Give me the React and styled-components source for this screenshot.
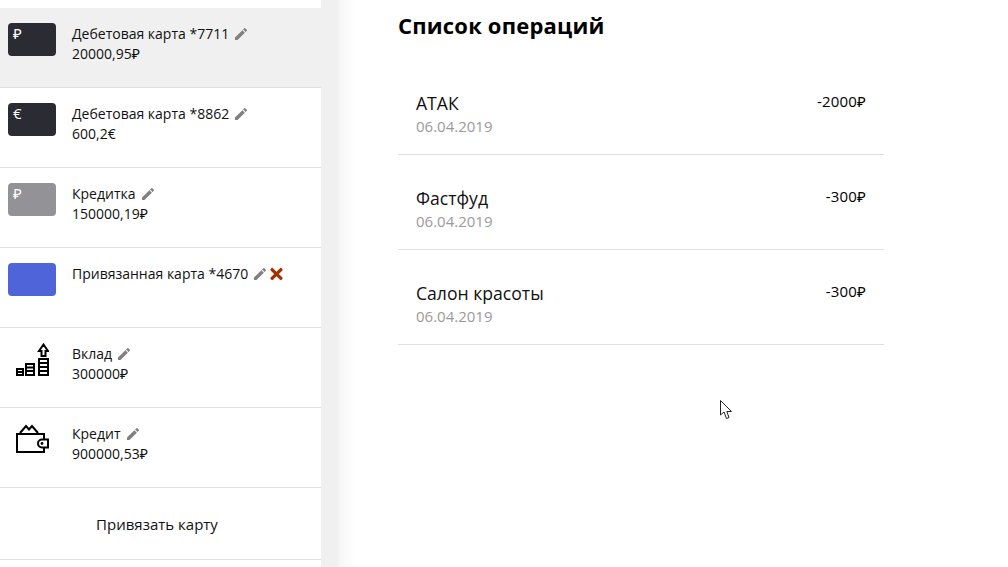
import React from "react";
import styled, { createGlobalStyle } from "styled-components";
import { FaTimes } from "react-icons/fa";
import { MdEdit } from "react-icons/md";

const GlobalStyle = createGlobalStyle`
  html, body {
    margin: 0;
    padding: 0;
    height: 100%;
    background: #fff;
    overflow: hidden;
  }
  body {
    font-family: "Open Sans", "Noto Sans", sans-serif;
    color: #000;
  }
`;

const Page = styled.div`
  display: flex;
  width: 1008px;
  height: 567px;
  position: relative;
`;

const Sidebar = styled.aside`
  width: 321px;
  flex-shrink: 0;
  padding-top: 8px;
  box-sizing: border-box;
`;

const Gutter = styled.div`
  width: 34px;
  flex-shrink: 0;
  background: linear-gradient(to right, #f0f0f0 0, #f0f0f0 17px, #f6f6f6 18px, #fff 34px);
`;

const Row = styled.div`
  display: flex;
  height: 80px;
  box-sizing: border-box;
  padding: 15px 0 0 8px;
  border-bottom: 1px solid #dfdfdf;
  background: ${(p) => (p.$active ? "#f0f0f0" : "#fff")};
`;

const Card = styled.div`
  width: 48px;
  height: 33px;
  border-radius: 4px;
  background: ${(p) => p.$color};
  color: #fff;
  font-size: 15px;
  line-height: 20px;
  padding-left: 5px;
  box-sizing: border-box;
  flex-shrink: 0;
`;

const IconBox = styled.div`
  width: 48px;
  height: 33px;
  flex-shrink: 0;
  padding-left: 8px;
  box-sizing: border-box;
`;

const Info = styled.div`
  margin-left: 16px;
  padding-top: 1px;
  font-size: 14px;
  line-height: 20px;
  color: #111;
`;

const Title = styled.div`
  display: flex;
  align-items: center;
  height: 20px;
`;

const Edit = styled(MdEdit)`
  width: 16px;
  height: 16px;
  margin-left: 4px;
  color: #808080;
`;

const Remove = styled(FaTimes)`
  width: 13px;
  height: 18px;
  margin-left: 2px;
  color: #a33200;
`;

const BindRow = styled.div`
  height: 72px;
  box-sizing: border-box;
  padding-right: 7px;
  border-bottom: 1px solid #dfdfdf;
  display: flex;
  align-items: center;
  justify-content: center;
  font-size: 15px;
  color: #111;
`;

const Main = styled.main`
  margin-left: 43px;
  width: 486px;
`;

const Heading = styled.h1`
  margin: 0 0 19px;
  padding-top: 9px;
  font-size: 22px;
  line-height: 32px;
  font-weight: 700;
  letter-spacing: 0.2px;
`;

const Operation = styled.div`
  display: flex;
  justify-content: space-between;
  height: 95px;
  box-sizing: border-box;
  padding: 31px 18px 0;
  border-bottom: 1px solid #dfdfdf;
`;

const OpName = styled.div`
  font-size: 17.6px;
  line-height: 24px;
  color: #111;
`;

const OpDate = styled.div`
  font-size: 15px;
  line-height: 22px;
  color: #9a9a9a;
`;

const OpSum = styled.div`
  font-size: 15px;
  line-height: 20px;
  letter-spacing: 0.2px;
`;

const Pointer = styled.svg`
  position: absolute;
  left: 720px;
  top: 400px;
`;

const DepositIcon = () => (
  <svg width="33" height="33" viewBox="0 0 33 33" fill="none" stroke="#000" strokeWidth="2">
    <path d="M27.5 1.5 L32 8 H29.5 V13 H25.5 V8 H23 Z" />
    <rect x="1" y="26" width="6" height="6" />
    <path d="M1 29 H7" />
    <rect x="10" y="21" width="8" height="11" />
    <path d="M10 24.5 H18 M10 28 H18" />
    <rect x="23" y="16" width="9" height="16" />
    <path d="M23 20 H32 M23 24 H32 M23 28 H32" />
  </svg>
);

const WalletIcon = () => (
  <svg width="33" height="30" viewBox="0 0 33 30" fill="none" stroke="#000" strokeWidth="2">
    <path d="M28 16 V11 H1 V29 H28 V25" />
    <path d="M4 10 L10 3 L13 6.5 L16 3 L22 10" />
    <path d="M32 16.5 H26 A4 4 0 0 0 26 24.5 H32 Z" fill="#fff" />
    <circle cx="26" cy="20.5" r="1.4" fill="#000" stroke="none" />
  </svg>
);

const accounts = [
  { title: "Дебетовая карта *7711", sum: "20000,95₽", color: "#2b2b33", sign: "₽", active: true },
  { title: "Дебетовая карта *8862", sum: "600,2€", color: "#2b2b33", sign: "€" },
  { title: "Кредитка", sum: "150000,19₽", color: "#929297", sign: "₽" },
  { title: "Привязанная карта *4670", color: "#5064da", removable: true },
  { title: "Вклад", sum: "300000₽", icon: <DepositIcon /> },
  { title: "Кредит", sum: "900000,53₽", icon: <WalletIcon /> },
];

const operations = [
  { name: "АТАК", date: "06.04.2019", sum: "-2000₽" },
  { name: "Фастфуд", date: "06.04.2019", sum: "-300₽" },
  { name: "Салон красоты", date: "06.04.2019", sum: "-300₽" },
];

export default function App() {
  return (
    <Page>
      <GlobalStyle />
      <Sidebar>
        {accounts.map((a) => (
          <Row key={a.title} $active={a.active}>
            {a.icon ? <IconBox>{a.icon}</IconBox> : <Card $color={a.color}>{a.sign}</Card>}
            <Info>
              <Title>
                {a.title}
                <Edit />
                {a.removable && <Remove />}
              </Title>
              <div>{a.sum}</div>
            </Info>
          </Row>
        ))}
        <BindRow>Привязать карту</BindRow>
      </Sidebar>
      <Gutter />
      <Main>
        <Heading>Список операций</Heading>
        {operations.map((o) => (
          <Operation key={o.name}>
            <div>
              <OpName>{o.name}</OpName>
              <OpDate>{o.date}</OpDate>
            </div>
            <OpSum>{o.sum}</OpSum>
          </Operation>
        ))}
      </Main>
      <Pointer width="14" height="20" viewBox="0 0 14 20">
        <path d="M0.5 0.5 V15 L4 12 L6.5 18.5 L9 17.5 L6.8 11.5 H11.5 Z" fill="#fff" stroke="#222" strokeWidth="1" />
      </Pointer>
    </Page>
  );
}
